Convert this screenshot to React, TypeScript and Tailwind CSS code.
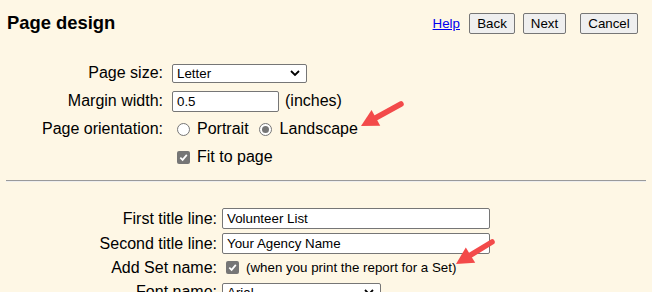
import React from "react";

const Chevron = () => (
  <svg width="10" height="7" viewBox="0 0 10 7" className="absolute right-[7px] top-1/2 -translate-y-1/2 pointer-events-none">
    <path d="M1 1.5 L5 5.5 L9 1.5" fill="none" stroke="#000" strokeWidth="1.8" />
  </svg>
);

const Select = ({ value, width }: { value: string; width: string }) => (
  <div className={`relative ${width}`}>
    <select
      defaultValue={value}
      className="appearance-none w-full h-[19px] border border-[#767676] rounded-[2px] bg-white pl-[4px] text-[13.33px] leading-[17px] text-black outline-none"
    >
      <option>{value}</option>
    </select>
    <Chevron />
  </div>
);

const Check = () => (
  <span className="inline-flex items-center justify-center w-[13px] h-[13px] rounded-[2px] bg-[#767676]">
    <svg width="9" height="9" viewBox="0 0 9 9">
      <path d="M1.3 4.6 L3.6 6.9 L7.8 1.9" fill="none" stroke="#fff" strokeWidth="1.7" />
    </svg>
  </span>
);

const Radio = ({ on }: { on?: boolean }) => (
  <span className="inline-flex items-center justify-center w-[13px] h-[13px] rounded-full border border-[#767676] bg-white">
    {on && <span className="w-[7px] h-[7px] rounded-full bg-[#767676]" />}
  </span>
);

const Arrow = ({ x1, y1, x2, y2 }: { x1: number; y1: number; x2: number; y2: number }) => {
  const dx = x2 - x1;
  const dy = y2 - y1;
  const len = Math.hypot(dx, dy);
  const ux = dx / len;
  const uy = dy / len;
  const bx = x2 - ux * 17;
  const by = y2 - uy * 17;
  const px = -uy * 9;
  const py = ux * 9;
  return (
    <g>
      <line x1={x1} y1={y1} x2={bx + ux * 2} y2={by + uy * 2} stroke="#f34a4a" strokeWidth="5.5" strokeLinecap="round" />
      <polygon points={`${x2},${y2} ${bx + px},${by + py} ${bx - px},${by - py}`} fill="#f34a4a" />
    </g>
  );
};

export default function App() {
  return (
    <div className="relative w-[652px] h-[292px] overflow-hidden bg-[#fef7e5] text-black font-['Liberation_Sans',Arial,sans-serif]">
      <div className="flex items-start justify-between h-[59px] pl-[7px] pr-[14px]">
        <h1 className="pt-[12px] text-[18.4px] leading-[21px] font-bold">Page design</h1>
        <div className="flex items-center pt-[13px] text-[13.33px]">
          <a href="#" className="text-[#0000ee] underline mr-[9px]">Help</a>
          <button className="h-[21px] w-[46px] border border-[#767676] rounded-[2px] bg-[#efefef] mr-[8px]">Back</button>
          <button className="h-[21px] w-[43px] border border-[#767676] rounded-[2px] bg-[#efefef] mr-[14px]">Next</button>
          <button className="h-[21px] w-[58px] border border-[#767676] rounded-[2px] bg-[#efefef]">Cancel</button>
        </div>
      </div>

      <div className="grid grid-cols-[163px_1fr] gap-x-[9px] auto-rows-[28px] items-center text-[16px]">
        <span className="text-right">Page size:</span>
        <Select value="Letter" width="w-[135px]" />

        <span className="text-right">Margin width:</span>
        <div className="flex items-center">
          <input
            defaultValue="0.5"
            className="w-[107px] h-[21px] border border-[#767676] rounded-[2px] bg-white pl-[4px] text-[13.33px] outline-none"
          />
          <span className="ml-[6px]">(inches)</span>
        </div>

        <span className="text-right">Page orientation:</span>
        <div className="flex items-center pl-[5px]">
          <Radio />
          <span className="ml-[7px]">Portrait</span>
          <span className="ml-[10px] flex"><Radio on /></span>
          <span className="ml-[8px]">Landscape</span>
        </div>

        <span />
        <div className="flex items-center pl-[5px]">
          <Check />
          <span className="ml-[7px]">Fit to page</span>
        </div>
      </div>

      <hr className="mt-[9px] mx-[6px] border-0 border-t border-t-[#9a9a9a] border-b border-b-[#eeeeee]" />

      <div className="mt-[24px] grid grid-cols-[217px_1fr] gap-x-[5px] grid-rows-[25px_25px_23px_25px] items-center text-[16px]">
        <span className="text-right">First title line:</span>
        <input
          defaultValue="Volunteer List"
          className="w-[268px] h-[21px] border border-[#767676] rounded-[2px] bg-white pl-[4px] text-[13.33px] outline-none"
        />

        <span className="text-right">Second title line:</span>
        <input
          defaultValue="Your Agency Name"
          className="w-[268px] h-[21px] border border-[#767676] rounded-[2px] bg-white pl-[4px] text-[13.33px] outline-none"
        />

        <span className="text-right">Add Set name:</span>
        <div className="flex items-center pl-[4px]">
          <Check />
          <span className="ml-[7px] text-[13.33px]">(when you print the report for a Set)</span>
        </div>

        <span className="text-right">Font name:</span>
        <Select value="Arial" width="w-[159px]" />
      </div>

      <svg className="absolute inset-0 pointer-events-none" width="652" height="292">
        <Arrow x1={401} y1={104} x2={361} y2={126} />
        <Arrow x1={492} y1={242} x2={456} y2={264} />
      </svg>
    </div>
  );
}
